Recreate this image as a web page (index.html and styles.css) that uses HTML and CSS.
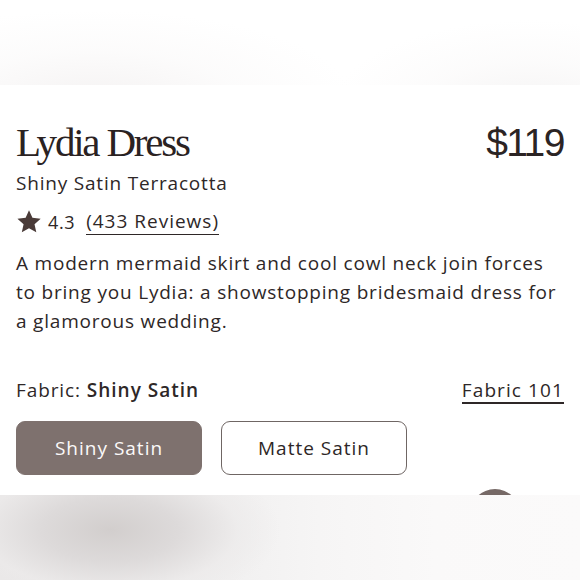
FILE: index.html
```html
<!DOCTYPE html>
<html lang="en">
<head>
<meta charset="utf-8">
<title>Lydia Dress</title>
<link rel="stylesheet" href="styles.css">
</head>
<body>
<div class="haze haze-top"></div>
<main class="card">
  <header class="head">
    <h1 class="title">Lydia Dress</h1>
    <div class="price">$119</div>
  </header>
  <p class="variant">Shiny Satin Terracotta</p>
  <div class="rating">
    <svg class="star" viewBox="0 0 24 24" width="26" height="25" aria-hidden="true">
      <path d="M12 1.2l3.3 7.3 7.9.8-5.9 5.3 1.7 7.8L12 18.4l-6.9 4 1.7-7.8L.9 9.3l7.9-.8z" fill="#4a3b38"/>
    </svg>
    <span class="score">4.3</span>
    <a class="reviews" href="#">(433 Reviews)</a>
  </div>
  <p class="desc">A modern mermaid skirt and cool cowl neck join forces to bring you Lydia: a showstopping bridesmaid dress for a glamorous wedding.</p>
  <div class="fabric-row">
    <span class="fabric-label">Fabric: <b>Shiny Satin</b></span>
    <a class="fabric-link" href="#">Fabric 101</a>
  </div>
  <div class="options">
    <button class="opt opt-active">Shiny Satin</button>
    <button class="opt">Matte Satin</button>
  </div>
  <div class="swatches">
    <span class="swatch"></span>
  </div>
</main>
<div class="haze haze-bottom"></div>
</body>
</html>
```
FILE: styles.css
```css
* { box-sizing: border-box; }

html, body {
  margin: 0;
  background: #fff;
}

body {
  width: 580px;
  height: 580px;
  overflow: hidden;
  font-family: "Open Sans", "Noto Sans", sans-serif;
  color: #2e2727;
}

.haze {
  height: 85px;
  position: relative;
  z-index: 1;
}

.haze-top {
  background:
    radial-gradient(ellipse 260px 90px at 95px 100px, #f5f3f3 0%, rgba(250,249,249,0.6) 55%, rgba(255,255,255,0) 100%),
    radial-gradient(ellipse 200px 90px at 530px 110px, #f5f4f4 0%, rgba(250,249,249,0.6) 55%, rgba(255,255,255,0) 100%),
    #fff;
}

.haze-bottom {
  background:
    radial-gradient(ellipse 170px 80px at 110px 35px, #d2cecd 0%, #dddada 40%, rgba(236,234,234,0.7) 75%, rgba(245,244,244,0) 100%),
    linear-gradient(90deg, #e9e7e7 0%, #eeeded 30%, #f6f5f5 55%, #faf9f9 75%, #fbfafa 100%);
}

.card {
  height: 410px;
  overflow: hidden;
  padding: 34px 16px 0 16px;
}

.head {
  display: flex;
  justify-content: space-between;
  align-items: baseline;
}

.title {
  margin: 0;
  font-family: "Liberation Serif", "DejaVu Serif", serif;
  font-weight: 400;
  font-size: 41px;
  line-height: 46px;
  letter-spacing: -2.2px;
  color: #2a2222;
}

.price {
  font-family: "Liberation Sans", Arial, sans-serif;
  font-size: 39px;
  line-height: 46px;
  letter-spacing: -1.5px;
  color: #2b2424;
}

.variant {
  margin: 5px 0 0;
  font-size: 19px;
  line-height: 24px;
  letter-spacing: 0.8px;
}

.rating {
  display: flex;
  align-items: center;
  gap: 6px;
  margin-top: 13px;
  font-size: 18px;
  line-height: 24px;
  letter-spacing: 0.6px;
}

.star { display: block; }

.reviews {
  margin-left: 5px;
  color: #2e2727;
  text-decoration: none;
  border-bottom: 1.5px solid #2e2727;
  letter-spacing: 1px;
  font-size: 19px;
  line-height: 26px;
}

.desc {
  margin: 14px 0 0;
  font-size: 19px;
  line-height: 29px;
  letter-spacing: 0.8px;
}

.fabric-row {
  display: flex;
  justify-content: space-between;
  align-items: baseline;
  margin-top: 42px;
  font-size: 19px;
  line-height: 24px;
  letter-spacing: 0.9px;
}

.fabric-label b { font-weight: 600; letter-spacing: 1px; }

.fabric-link {
  color: #2e2727;
  text-decoration: none;
  border-bottom: 2px solid #2e2727;
  letter-spacing: 1.1px;
}

.options {
  display: flex;
  gap: 19px;
  margin-top: 17px;
}

.opt {
  width: 186px;
  height: 54px;
  border-radius: 9px;
  border: 1.5px solid #6f6664;
  background: #fff;
  font-family: inherit;
  font-size: 19px;
  letter-spacing: 1px;
  color: #2e2727;
}

.opt-active {
  background: #7e716e;
  border-color: #7e716e;
  color: #fbf9f9;
}

.swatches {
  display: flex;
  justify-content: flex-end;
  padding-right: 44px;
  margin-top: 14px;
}

.swatch {
  width: 50px;
  height: 50px;
  border-radius: 50%;
  background: #766966;
}
```
